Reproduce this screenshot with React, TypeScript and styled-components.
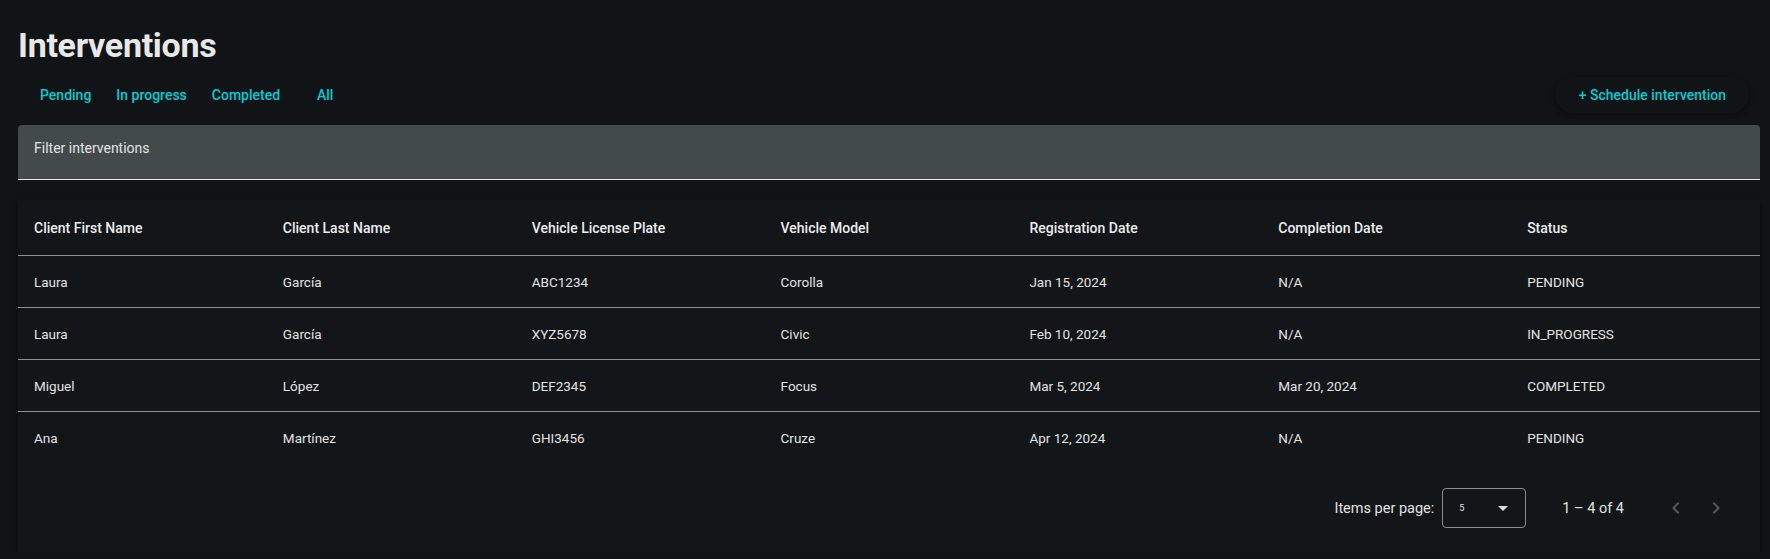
import React from "react";
import styled, { createGlobalStyle } from "styled-components";

const GlobalStyle = createGlobalStyle`
  html, body {
    margin: 0;
    padding: 0;
    background: #111416;
    font-family: Roboto, "Noto Sans", "Liberation Sans", sans-serif;
    color: #e6e6e6;
  }
`;

const Page = styled.div`
  width: 1742px;
  margin-left: 18px;
  padding-top: 25px;
`;

const Title = styled.h1`
  margin: 0;
  font-size: 34px;
  line-height: 40px;
  font-weight: 700;
  color: #e8e8e8;
  letter-spacing: -0.3px;
`;

const Toolbar = styled.div`
  display: flex;
  align-items: center;
  justify-content: space-between;
  margin-top: 12px;
  padding-left: 10px;
  padding-right: 11px;
`;

const Tabs = styled.div`
  display: flex;
  gap: 1px;
`;

const TabButton = styled.button`
  height: 36px;
  min-width: 64px;
  padding: 0 12px;
  border: none;
  border-radius: 4px;
  background: transparent;
  color: #00ccd6;
  font-family: inherit;
  font-size: 14px;
  font-weight: 500;
  cursor: pointer;
`;

const ScheduleButton = styled.button`
  height: 36px;
  padding: 0 23px 0 24px;
  border: none;
  border-radius: 18px;
  background: #111416;
  color: #00ccd6;
  font-family: inherit;
  font-size: 14px;
  font-weight: 500;
  box-shadow: 0 2px 4px -1px rgba(0, 0, 0, 0.35), 0 1px 6px rgba(0, 0, 0, 0.2);
  cursor: pointer;
`;

const FilterPanel = styled.div`
  margin-top: 12px;
  height: 55px;
  box-sizing: border-box;
  padding: 15px 16px 0;
  background: #424a4a;
  border-radius: 4px 4px 0 0;
  border-bottom: 1px solid #e4e6e6;
  font-size: 14px;
  line-height: 16px;
  color: #e2e4e4;
`;

const Card = styled.div`
  margin-top: 20px;
  background: #121618;
  box-shadow: 0 3px 4px 1px rgba(0, 0, 0, 0.45);
`;

const Row = styled.div<{ $head?: boolean; $last?: boolean }>`
  display: grid;
  grid-template-columns: repeat(7, 1fr);
  align-items: center;
  height: ${(p) => (p.$head ? 56 : 52)}px;
  box-sizing: border-box;
  border-bottom: ${(p) => (p.$last ? "none" : "1px solid #8e9192")};
`;

const Cell = styled.div<{ $head?: boolean }>`
  padding-left: 16px;
  font-size: ${(p) => (p.$head ? 14 : 13.5)}px;
  font-weight: ${(p) => (p.$head ? 500 : 400)};
  color: ${(p) => (p.$head ? "#ececec" : "#e2e2e2")};
  white-space: nowrap;
`;

const Paginator = styled.div`
  display: flex;
  align-items: center;
  justify-content: flex-end;
  height: 88px;
  padding-right: 24px;
  font-size: 14.5px;
  color: #e2e2e2;
`;

const PageLabel = styled.span`
  margin-right: 8px;
`;

const SizeSelect = styled.div`
  display: flex;
  align-items: center;
  justify-content: space-between;
  width: 84px;
  height: 40px;
  box-sizing: border-box;
  padding: 0 17px 0 16px;
  border: 1px solid #8a8d8e;
  border-radius: 4px;
  font-size: 9px;
  color: #e2e2e2;
`;

const Caret = styled.span`
  width: 0;
  height: 0;
  border-left: 5px solid transparent;
  border-right: 5px solid transparent;
  border-top: 5px solid #dcdcdc;
`;

const RangeLabel = styled.span`
  margin-left: 36px;
  margin-right: 32px;
`;

const NavButton = styled.button`
  display: flex;
  align-items: center;
  justify-content: center;
  width: 40px;
  height: 40px;
  padding: 0;
  border: none;
  background: transparent;
  color: #55595b;
`;

const columns = [
  "Client First Name",
  "Client Last Name",
  "Vehicle License Plate",
  "Vehicle Model",
  "Registration Date",
  "Completion Date",
  "Status",
];

const rows = [
  ["Laura", "García", "ABC1234", "Corolla", "Jan 15, 2024", "N/A", "PENDING"],
  ["Laura", "García", "XYZ5678", "Civic", "Feb 10, 2024", "N/A", "IN_PROGRESS"],
  ["Miguel", "López", "DEF2345", "Focus", "Mar 5, 2024", "Mar 20, 2024", "COMPLETED"],
  ["Ana", "Martínez", "GHI3456", "Cruze", "Apr 12, 2024", "N/A", "PENDING"],
];

const Chevron = ({ dir }: { dir: "left" | "right" }) => (
  <svg width="24" height="24" viewBox="0 0 24 24" fill="currentColor">
    {dir === "left" ? (
      <path d="M15.41 7.41 14 6l-6 6 6 6 1.41-1.41L10.83 12z" />
    ) : (
      <path d="M10 6 8.59 7.41 13.17 12l-4.58 4.59L10 18l6-6z" />
    )}
  </svg>
);

const App = () => {
  return (
    <>
      <GlobalStyle />
      <Page>
        <Title>Interventions</Title>
        <Toolbar>
          <Tabs>
            <TabButton>Pending</TabButton>
            <TabButton>In progress</TabButton>
            <TabButton>Completed</TabButton>
            <TabButton>All</TabButton>
          </Tabs>
          <ScheduleButton>+ Schedule intervention</ScheduleButton>
        </Toolbar>
        <FilterPanel>Filter interventions</FilterPanel>
        <Card>
          <Row $head>
            {columns.map((c) => (
              <Cell $head key={c}>
                {c}
              </Cell>
            ))}
          </Row>
          {rows.map((r, i) => (
            <Row key={i} $last={i === rows.length - 1}>
              {r.map((v, j) => (
                <Cell key={j}>{v}</Cell>
              ))}
            </Row>
          ))}
          <Paginator>
            <PageLabel>Items per page:</PageLabel>
            <SizeSelect>
              <span>5</span>
              <Caret />
            </SizeSelect>
            <RangeLabel>1 – 4 of 4</RangeLabel>
            <NavButton>
              <Chevron dir="left" />
            </NavButton>
            <NavButton>
              <Chevron dir="right" />
            </NavButton>
          </Paginator>
        </Card>
      </Page>
    </>
  );
};

export default App;
